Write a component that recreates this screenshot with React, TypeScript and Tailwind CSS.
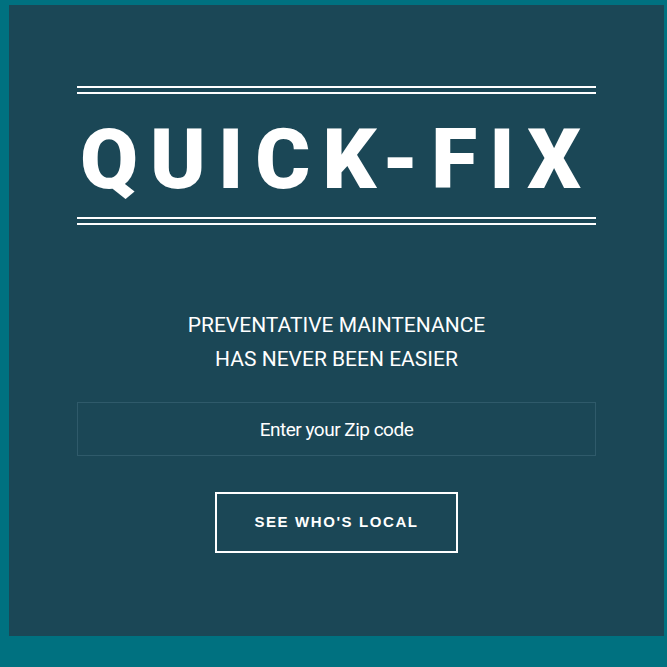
import { useState } from "react";

/** Double rule used above and below the wordmark. */
function DoubleRule() {
  return (
    <div className="flex flex-col gap-[4px] w-full">
      <div className="h-[2px] bg-white" />
      <div className="h-[2px] bg-white" />
    </div>
  );
}

export default function App() {
  const [zip, setZip] = useState("");
  return (
    <div className="min-h-[667px] bg-[#007180] pt-[5px] pl-[9px] pr-[3px]">
      <div className="h-[631px] bg-[#1b4756] px-[68px] pt-[81px] flex flex-col items-center">
        <DoubleRule />
        <h1
          className="mt-[24px] h-[84px] leading-[84px] text-[84px] font-black text-white tracking-[12px] text-center whitespace-nowrap"
          style={{ fontFamily: 'Roboto, "Liberation Sans", Arial, sans-serif' }}
        >
          QUICK-FIX
        </h1>
        <div className="mt-[15px] w-full">
          <DoubleRule />
        </div>
        <p
          className="mt-[83px] text-[21px] leading-[34px] text-white text-center"
          style={{ fontFamily: 'Roboto, "Liberation Sans", sans-serif' }}
        >
          PREVENTATIVE MAINTENANCE
          <br />
          HAS NEVER BEEN EASIER
        </p>
        <input
          value={zip}
          onChange={(e) => setZip(e.target.value)}
          placeholder="Enter your Zip code"
          className="mt-[26px] w-full h-[54px] border border-[#2f5a6a] bg-transparent text-center text-[19px] tracking-[-0.5px] text-white placeholder:text-white outline-none"
          style={{ fontFamily: 'Roboto, "Liberation Sans", sans-serif' }}
        />
        <button
          className="mt-[36px] w-[243px] h-[61px] border-2 border-white text-white text-[15px] font-bold tracking-[1.6px]"
          style={{ fontFamily: '"Liberation Sans", Arial, sans-serif' }}
        >
          SEE WHO'S LOCAL
        </button>
      </div>
    </div>
  );
}
